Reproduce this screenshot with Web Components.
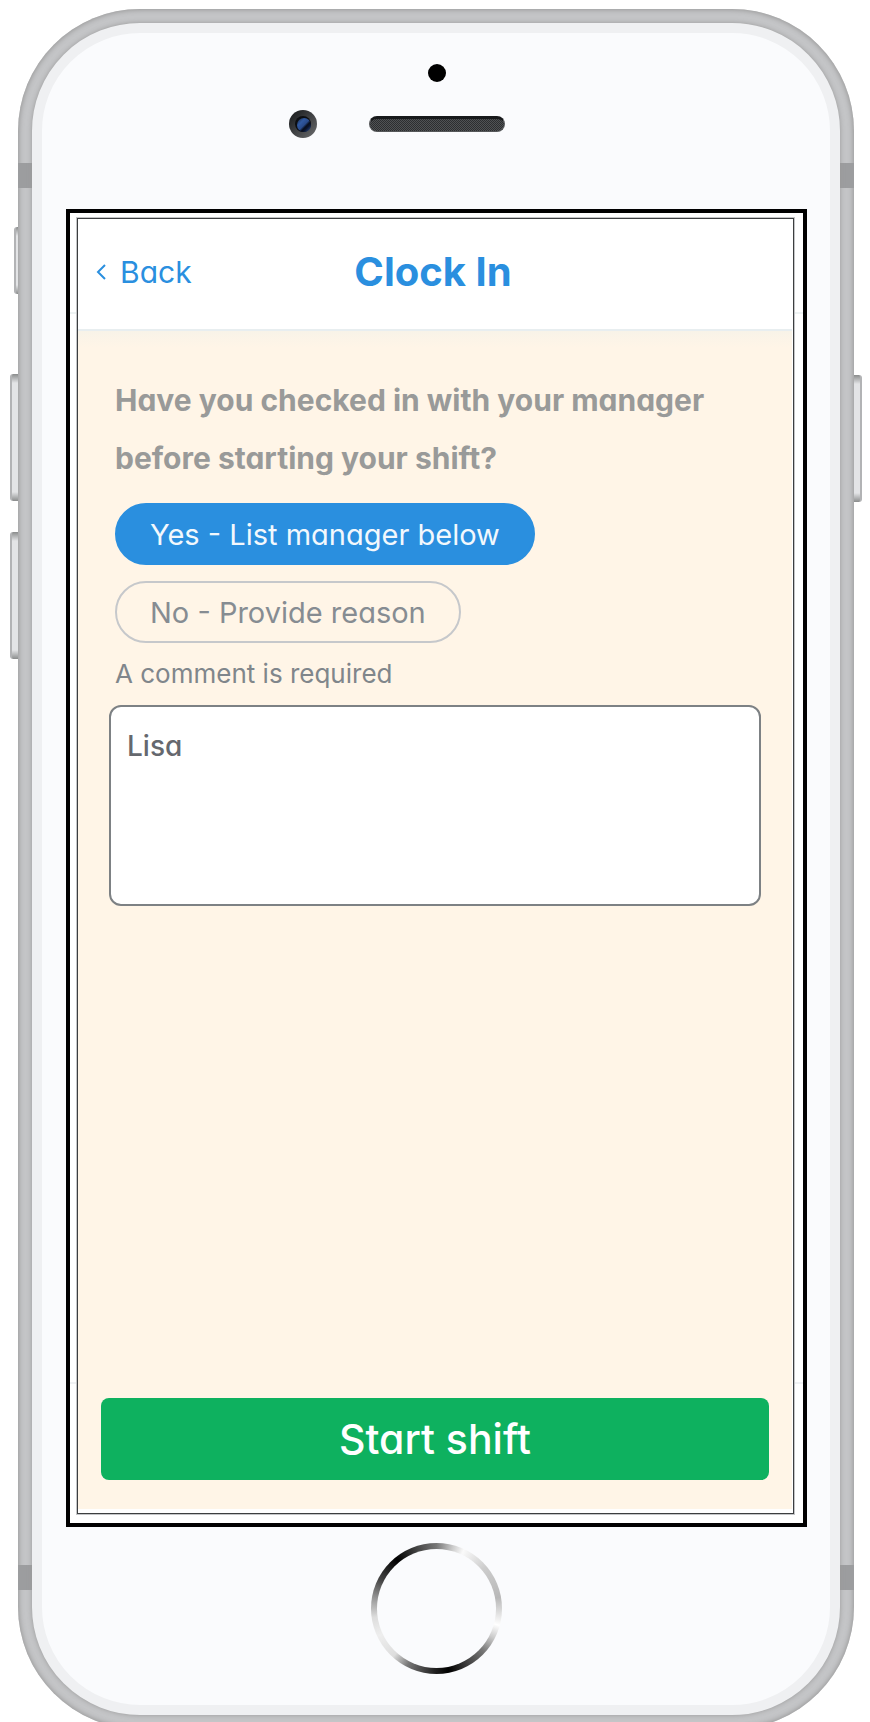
<!DOCTYPE html>
<html lang="en">
<head>
<meta charset="utf-8">
<title>Clock In</title>
<style>
  html, body {
    margin: 0;
    height: 100%;
    overflow: hidden;
    background-color: white;
  }

  body {
    font-family: Inter, 'Liberation Sans', sans-serif;
    font-feature-settings: 'cv11';
    color: #80868b;
    --blue: #2a8fdf;
    --green: #0eb15f;
    --cream: #fff5e7;
  }
</style>
</head>

<template id="phone-frame">
  <style>
    :host {
      display: flex;
      position: relative;
      box-sizing: border-box;
      margin: 9px 16px 0 18px;
      padding: 14px;
      min-height: calc(100vh - 2px);
      border-radius: 122px;
      background-color: #c4c5c7;
      box-shadow: inset 0 0 5px 1px #999;
    }

    .front {
      flex: 1;
      display: flex;
      flex-direction: column;
      z-index: 1;
      border: 10px solid #eff0f2;
      border-radius: 108px;
      background-color: #fafbfd;
      box-shadow: 0 0 5px #999;
    }

    .top {
      display: flex;
      flex-direction: column;
      align-items: center;
      gap: 28px;
      height: 145px;
      padding: 31px 0 0 2px;
    }

    .sensor {
      width: 18px;
      height: 18px;
      border-radius: 50%;
      background-color: black;
    }

    .row {
      align-self: stretch;
      display: grid;
      grid-template-columns: 1fr auto 1fr;
      align-items: center;
      column-gap: 52px;
    }

    .camera {
      justify-self: end;
      display: block;
    }

    .speaker {
      box-sizing: border-box;
      width: 136px;
      height: 16px;
      border: 1px solid #555759;
      border-top: 3px solid #17191b;
      border-radius: 8px;
      background: repeating-conic-gradient(#2c2e30 0 25%, #505254 0 50%) 0 0 / 2px 2px;
    }

    .bottom {
      display: flex;
      justify-content: center;
      height: 162px;
      padding-top: 16px;
    }

    .home {
      box-sizing: border-box;
      width: 131px;
      height: 131px;
      padding: 6px;
      border: none;
      border-radius: 50%;
      background: conic-gradient(#777, #ccc 15deg, #fafafa 25deg, #ccc 50deg,
        #b8b8b8 80deg, #e8e8e8 97deg, #fff 105deg, #ccc 117deg, #777 132deg,
        #444 149deg, #000 169deg, #222 182deg, #777 207deg, #ddd 222deg,
        #eee 245deg, #ddd 262deg, #999 279deg, #444 297deg, #000 321deg,
        #444 342deg, #777);
    }

    .home::before {
      content: '';
      display: block;
      height: 100%;
      border-radius: 50%;
      background-color: #fafbfd;
    }

    /* Antenna lines and side keys sit on the metal edge. */
    .band {
      position: absolute;
      left: 0;
      right: 0;
      height: 25px;
      background-color: #9c9d9f;
    }

    .band.upper { top: 154px; }
    .band.lower { bottom: 139px; }

    .key {
      position: absolute;
      box-sizing: border-box;
      left: -8px;
      width: 8px;
      height: 127px;
      border-left: 2px solid #b2b3b5;
      border-radius: 3px 0 0 3px;
      background: linear-gradient(#8a8c8c, #e3e4e6 9px, #e3e4e6 calc(100% - 9px), #8a8c8c);
    }

    .key.mute {
      top: 218px;
      left: -4px;
      width: 4px;
      height: 67px;
    }

    .key.up { top: 365px; }
    .key.down { top: 523px; }

    .key.power {
      top: 366px;
      left: auto;
      right: -8px;
      border-left: none;
      border-right: 2px solid #b2b3b5;
      border-radius: 0 3px 3px 0;
    }
  </style>
  <div class="band upper"></div>
  <div class="band lower"></div>
  <div class="key mute"></div>
  <div class="key up"></div>
  <div class="key down"></div>
  <div class="key power"></div>
  <div class="front">
    <div class="top">
      <div class="sensor"></div>
      <div class="row">
        <svg class="camera" width="28" height="28" viewBox="0 0 28 28">
          <defs>
            <linearGradient id="rim" x1="0" y1="0" x2="1" y2="1">
              <stop offset="0.1" stop-color="#1c1e20"/>
              <stop offset="0.9" stop-color="#636466"/>
            </linearGradient>
            <linearGradient id="lens" x1="0" y1="0" x2="1" y2="1">
              <stop offset="0.15" stop-color="#23406f"/>
              <stop offset="0.3" stop-color="#3059a2"/>
              <stop offset="0.5" stop-color="#284a8a"/>
              <stop offset="0.62" stop-color="#070d1c"/>
              <stop offset="0.72" stop-color="#0b1530"/>
              <stop offset="0.85" stop-color="#1d3768"/>
            </linearGradient>
          </defs>
          <circle cx="14" cy="14" r="14" fill="url(#rim)"/>
          <circle cx="14" cy="14" r="8" fill="#0c0e12"/>
          <circle cx="15" cy="15" r="7" fill="url(#lens)"/>
        </svg>
        <div class="speaker"></div>
      </div>
    </div>
    <slot></slot>
    <div class="bottom"><button class="home" aria-label="Home"></button></div>
  </div>
</template>

<template id="phone-screen">
  <style>
    :host {
      flex: 1;
      display: flex;
      margin: 0 23px 0 24px;
      padding: 5px 9px 9px 7px;
      border: 4px solid black;
      background:
        linear-gradient(#eef3f3, #eef3f3) 0 99px / 100% 2px no-repeat,
        linear-gradient(#f0f2f4, #f0f2f4) 0 calc(100% - 139px) / 100% 2px no-repeat,
        white;
    }

    .view {
      flex: 1;
      display: flex;
      flex-direction: column;
      border: 1px solid #3c3e40;
      padding: 0 1px 4px 0;
      background-color: white;
      box-shadow: 0 0 0 1px #c4c5c7;
    }
  </style>
  <div class="view"><slot></slot></div>
</template>

<template id="nav-bar">
  <style>
    :host {
      display: grid;
      grid-template-columns: 1fr auto 1fr;
      align-items: center;
      height: 106px;
      padding: 0 22px 4px 18px;
      border-bottom: 2px solid #e8eef0;
      color: var(--blue);
    }

    a {
      display: flex;
      align-items: center;
      gap: 14px;
      justify-self: start;
      font-size: 30px;
      color: inherit;
      text-decoration: none;
    }

    h1 {
      margin: 0;
      font-size: 40px;
      line-height: 48px;
    }
  </style>
  <a href="#">
    <svg width="10" height="16" viewBox="0 0 10 16" fill="none" stroke="currentColor" stroke-width="2">
      <path d="M9 1 2 8l7 7"/>
    </svg>
    <slot name="back"></slot>
  </a>
  <h1><slot></slot></h1>
</template>

<template id="shift-form">
  <style>
    :host {
      flex: 1;
      display: flex;
      flex-direction: column;
      background: linear-gradient(#f8f3e8, #fff5e700) 0 0 / 100% 16px no-repeat, var(--cream);
    }

    .fields {
      flex: 1;
      display: flex;
      flex-direction: column;
      gap: 16px;
      padding: 40px 31px 0;
    }

    .footer {
      display: flex;
      padding: 0 23px 29px;
    }
  </style>
  <div class="fields"><slot></slot></div>
  <div class="footer"><slot name="footer"></slot></div>
</template>

<template id="question-block">
  <style>
    :host {
      display: flex;
      flex-direction: column;
      align-items: flex-start;
      gap: 16px;
      padding-left: 6px;
    }

    h2 {
      margin: 0;
      font-size: 30px;
      line-height: 58px;
      color: #999a99;
    }
  </style>
  <h2></h2>
  <slot></slot>
</template>

<template id="pill-option">
  <style>
    :host {
      display: block;
    }

    button {
      display: block;
      height: 62px;
      padding: 0 33px;
      border: 2px solid #c6c8cb;
      border-radius: 31px;
      background-color: transparent;
      font: inherit;
      font-feature-settings: inherit;
      font-size: 29px;
      color: #868c92;
    }

    :host([selected]) button {
      border-color: var(--blue);
      background-color: var(--blue);
      color: #f2f8fd;
    }
  </style>
  <button type="button"><slot></slot></button>
</template>

<template id="comment-box">
  <style>
    :host {
      display: flex;
      flex-direction: column;
      gap: 16px;
    }

    label {
      padding-left: 6px;
      font-size: 26px;
      line-height: 30px;
    }

    textarea {
      box-sizing: border-box;
      width: 100%;
      height: 201px;
      padding: 20px 16px;
      border: 2px solid #7d8184;
      border-radius: 12px;
      background-color: white;
      font: inherit;
      font-feature-settings: inherit;
      font-size: 28px;
      font-weight: 500;
      line-height: 38px;
      color: #65686e;
      resize: none;
    }
  </style>
  <label for="comment"></label>
  <textarea id="comment"></textarea>
</template>

<template id="action-button">
  <style>
    :host {
      flex: 1;
      display: block;
    }

    button {
      display: block;
      width: 100%;
      height: 82px;
      border: none;
      border-radius: 8px;
      background-color: var(--green);
      font: inherit;
      font-feature-settings: inherit;
      font-size: 41px;
      font-weight: 500;
      color: white;
    }
  </style>
  <button type="button"><slot></slot></button>
</template>

<body>
  <phone-frame>
    <phone-screen>
      <nav-bar><span slot="back">Back</span>Clock In</nav-bar>
      <shift-form>
        <question-block text="Have you checked in with your manager before starting your shift?">
          <pill-option selected>Yes - List manager below</pill-option>
          <pill-option>No - Provide reason</pill-option>
        </question-block>
        <comment-box label="A comment is required" value="Lisa"></comment-box>
        <action-button slot="footer">Start shift</action-button>
      </shift-form>
    </phone-screen>
  </phone-frame>
</body>

<script>
  class TemplateElement extends HTMLElement {
    constructor() {
      super();
      const template = document.getElementById(this.localName);
      this.attachShadow({ mode: 'open' });
      this.shadowRoot.appendChild(document.importNode(template.content, true));
    }
  }

  customElements.define('phone-frame', class extends TemplateElement {});
  customElements.define('phone-screen', class extends TemplateElement {});
  customElements.define('nav-bar', class extends TemplateElement {});
  customElements.define('shift-form', class extends TemplateElement {});
  customElements.define('action-button', class extends TemplateElement {});

  customElements.define('question-block', class extends TemplateElement {
    connectedCallback() {
      this.shadowRoot.querySelector('h2').textContent = this.getAttribute('text');

      // Only one answer can be selected at a time.
      this.addEventListener('click', event => {
        const picked = event.target.closest('pill-option');
        if (!picked) {
          return;
        }
        for (let option of this.querySelectorAll('pill-option')) {
          option.toggleAttribute('selected', option === picked);
        }
      });
    }
  });

  customElements.define('pill-option', class extends TemplateElement {
    static get observedAttributes() { return ['selected']; }

    connectedCallback() {
      this._update();
    }

    attributeChangedCallback() {
      this._update();
    }

    _update() {
      this.shadowRoot.querySelector('button').setAttribute('aria-pressed', this.hasAttribute('selected'));
    }
  });

  customElements.define('comment-box', class extends TemplateElement {
    connectedCallback() {
      this.shadowRoot.querySelector('label').textContent = this.getAttribute('label');
      this.shadowRoot.querySelector('textarea').textContent = this.getAttribute('value');
    }
  });
</script>
</html>
